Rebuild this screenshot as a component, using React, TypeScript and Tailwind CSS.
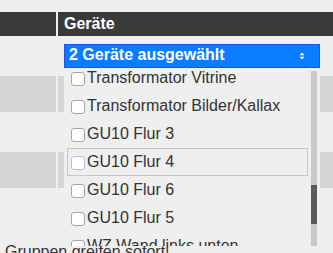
const items = [
  'Transformator Vitrine',
  'Transformator Bilder/Kallax',
  'GU10 Flur 3',
  'GU10 Flur 4',
  'GU10 Flur 6',
  'GU10 Flur 5',
  'WZ Wand links unten',
];

function Row({ gray, height }: { gray?: boolean; height: string }) {
  return (
    <div className={`grid grid-cols-[56px_1fr] gap-[2px] ${height}`}>
      <div className={gray ? 'bg-[#d5d5d5]' : ''} />
      <div className={gray ? 'bg-[#d5d5d5]' : ''} />
    </div>
  );
}

export default function App() {
  return (
    <div
      className="w-[333px] h-[253px] overflow-hidden bg-[#efefef] text-[#333]"
      style={{ fontFamily: '"Liberation Sans", Arial, sans-serif' }}
    >
      <div className="h-3" />

      {/* Header */}
      <div className="grid grid-cols-[56px_1fr] gap-[2px] h-6">
        <div className="bg-[#3a3a3a]" />
        <div className="bg-[#3a3a3a] pl-[6px] text-white font-bold text-[16px] leading-6">Geräte</div>
      </div>

      {/* Select row */}
      <div className="grid grid-cols-[56px_1fr] gap-[2px] h-10">
        <div />
        <div className="pl-[6px] pt-2">
          <div className="relative w-[256px]">
            <div className="h-6 flex items-center justify-between bg-[#0a7cff] border border-[#1f50f5] pl-[4px] pr-[14px] pb-[2px] text-white font-bold text-[16px]">
              <span>2 Geräte ausgewählt</span>
              <svg width="6" height="8" viewBox="0 0 6 8" className="mt-[2px]">
                <path d="M3 0.5 L5.5 3.2 L0.5 3.2 Z" fill="white" />
                <path d="M3 7.5 L5.5 4.8 L0.5 4.8 Z" fill="white" />
              </svg>
            </div>

            {/* Dropdown list */}
            <div className="absolute left-0 top-full w-[256px] h-[178px] overflow-hidden bg-[#efefef] flex">
              <div className="flex-1 pl-[3px] pr-[3px] -mt-[4px]">
                {items.map((name, i) => (
                  <div
                    key={name}
                    className={`h-7 flex items-center gap-[2px] pl-[3px] border text-[16px] leading-7 whitespace-nowrap ${
                      i === 3 ? 'border-[#c8c8c8]' : 'border-transparent'
                    }`}
                  >
                    <span
                      className={`w-[14px] h-[14px] shrink-0 rounded-[3px] bg-white border mt-[2px] ${
                        i === 3 ? 'border-[#a9c6e8]' : 'border-[#a5a5a5]'
                      }`}
                    />
                    <span>{name}</span>
                  </div>
                ))}
              </div>
              <div className="w-[6px] mt-[3px] mr-[3px] bg-[#c8c8c8] flex flex-col">
                <div className="h-[114px]" />
                <div className="h-[39px] bg-[#5a5a5a]" />
              </div>
            </div>
          </div>
        </div>
      </div>

      <Row gray height="h-9" />
      <Row height="h-10" />
      <Row gray height="h-9" />
      <div className="h-[55px]" />

      <div className="pl-[5px] text-[16px] leading-[18px] whitespace-nowrap">Gruppen greifen sofort!</div>
    </div>
  );
}
